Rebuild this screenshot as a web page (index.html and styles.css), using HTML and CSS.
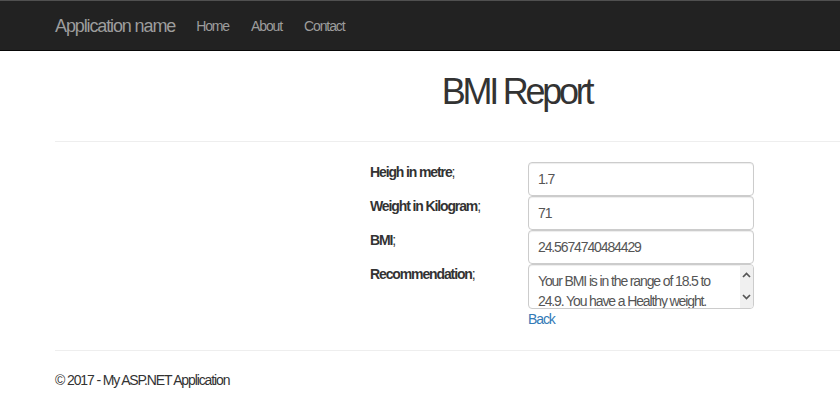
FILE: index.html
```html
<!DOCTYPE html>
<html lang="en">
<head>
    <meta charset="UTF-8">
    <meta name="viewport" content="width=device-width, initial-scale=1.0">
    <title>BMI Report - My ASP.NET Application</title>
    <link rel="stylesheet" href="styles.css">
</head>
<body>
    <div class="navbar">
        <a class="navbar-brand" href="#">Application name</a>
        <ul class="nav">
            <li><a href="#">Home</a></li>
            <li><a href="#">About</a></li>
            <li><a href="#">Contact</a></li>
        </ul>
    </div>

    <div class="container body-content">
        <h1>BMI Report</h1>
        <hr>

        <div class="report">
            <div class="form-row">
                <label class="control-label"><b>Heigh in metre</b>;</label>
                <input class="form-control" type="text" value="1.7" readonly>
            </div>
            <div class="form-row">
                <label class="control-label"><b>Weight in Kilogram</b>;</label>
                <input class="form-control" type="text" value="71" readonly>
            </div>
            <div class="form-row">
                <label class="control-label"><b>BMI</b>;</label>
                <input class="form-control" type="text" value="24.5674740484429" readonly>
            </div>
            <div class="form-row">
                <label class="control-label"><b>Recommendation</b>;</label>
                <div class="textarea-wrap">
                    <textarea class="form-control recommendation" readonly>Your BMI is in the range of 18.5 to 24.9. You have a Healthy weight.</textarea>
                    <div class="scrollbar">
                        <svg width="9" height="6" viewBox="0 0 9 6"><path d="M1 5 L4.5 1.5 L8 5" fill="none" stroke="#555" stroke-width="1.7"/></svg>
                        <svg width="9" height="6" viewBox="0 0 9 6"><path d="M1 1 L4.5 4.5 L8 1" fill="none" stroke="#555" stroke-width="1.7"/></svg>
                    </div>
                </div>
            </div>
            <div class="form-row">
                <span></span>
                <a class="back-link" href="#">Back</a>
            </div>
        </div>

        <hr class="footer-rule">
        <footer>
            <p>&copy; 2017 - My ASP.NET Application</p>
        </footer>
    </div>
</body>
</html>
```

FILE: styles.css
```css
body {
    margin: 0;
    font-family: "Liberation Sans", Arial, sans-serif;
    font-size: 14px;
    line-height: 20px;
    letter-spacing: -0.08em;
    color: #333;
    background-color: #fff;
}
a {
    color: #337ab7;
    text-decoration: none;
}
.navbar {
    display: flex;
    align-items: center;
    height: 49px;
    padding-left: 55px;
    background-color: #222;
    border-top: 1px solid #505050;
    border-bottom: 1px solid #080808;
}
.navbar-brand {
    font-size: 18px;
    color: #9d9d9d;
    margin-right: 10px;
}
.nav {
    display: flex;
    margin: 0;
    padding: 0;
    list-style: none;
}
.nav a {
    display: block;
    padding: 0 11px;
    color: #9d9d9d;
}
.container {
    padding-left: 55px;
}
h1 {
    margin: 21px 0 29px;
    padding-left: 138px;
    font-size: 36px;
    font-weight: 500;
    line-height: 1.1;
    letter-spacing: -0.09em;
    text-align: center;
}
hr {
    margin: 20px 0;
    border: 0;
    border-top: 1px solid #eee;
}
h1 + hr {
    margin-top: 0;
}
.footer-rule {
    margin: 21px 0 19px;
}
.report {
    margin-left: 315px;
}
.form-row {
    display: grid;
    grid-template-columns: 158px 226px;
}
.control-label {
    font-weight: normal;
}
.form-control {
    box-sizing: border-box;
    width: 226px;
    height: 34px;
    margin: 0;
    padding: 6px 9px;
    font-family: inherit;
    font-size: 14px;
    line-height: 20px;
    letter-spacing: inherit;
    color: #555;
    background-color: #fff;
    border: 1px solid #ccc;
    border-radius: 4px;
    box-shadow: inset 0 1px 1px rgba(0,0,0,0.075);
}
.textarea-wrap {
    position: relative;
    height: 45px;
}
.recommendation {
    display: block;
    height: 45px;
    padding-right: 22px;
    resize: none;
    overflow: hidden;
}
.scrollbar {
    position: absolute;
    top: 1px;
    right: 1px;
    bottom: 1px;
    width: 13px;
    display: flex;
    flex-direction: column;
    justify-content: space-around;
    align-items: center;
    background-color: #f0f0f0;
    border-radius: 0 3px 3px 0;
}
.scrollbar svg {
    display: block;
}
.back-link {
    display: block;
}
footer p {
    margin: 0 0 10px;
}
```
